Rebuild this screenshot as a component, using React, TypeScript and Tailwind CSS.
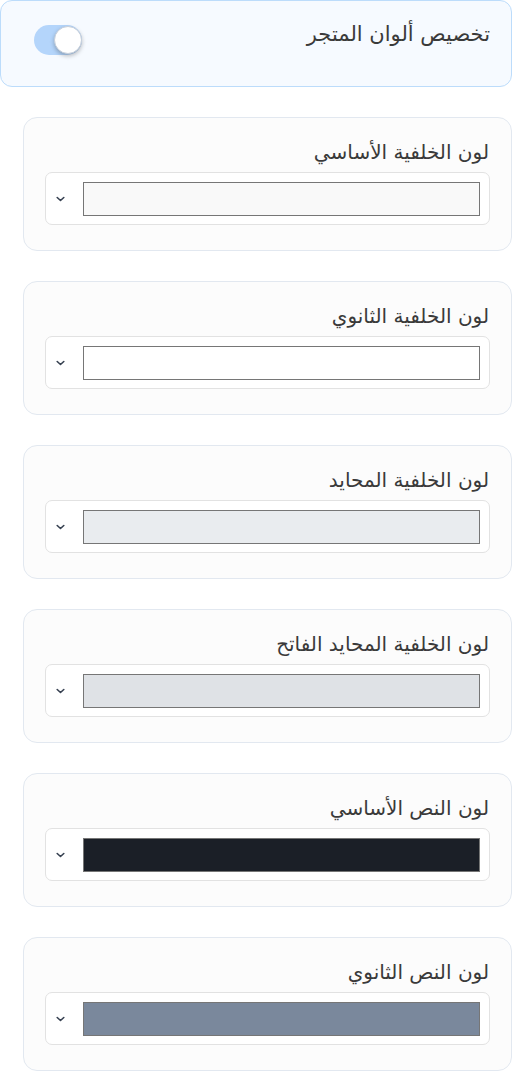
import React, { useState } from 'react';

// Color settings panel: a toggle header followed by one card per color field.
interface ColorField {
  label: string;
  value: string;
}

const fields: ColorField[] = [
  { label: 'لون الخلفية الأساسي', value: '#f9f9f9' },
  { label: 'لون الخلفية الثانوي', value: '#ffffff' },
  { label: 'لون الخلفية المحايد', value: '#e9ecef' },
  { label: 'لون الخلفية المحايد الفاتح', value: '#dfe2e6' },
  { label: 'لون النص الأساسي', value: '#1b1f27' },
  { label: 'لون النص الثانوي', value: '#7a889c' },
];

const Chevron = () => (
  <svg width="9" height="6" viewBox="0 0 9 6" fill="none" className="text-[#374151]">
    <path d="M1.2 1.5L4.5 4.5L7.8 1.5" stroke="currentColor" strokeWidth="1.6" strokeLinecap="round" strokeLinejoin="round" />
  </svg>
);

const ColorCard: React.FC<ColorField> = ({ label, value }) => (
  <div className="ml-[23px] h-[134px] rounded-[14px] border border-[#e2e8f0] bg-[#fcfcfc] px-[21px] pt-[19px]">
    <div className="pr-[1px] text-[20px] leading-[30px] text-[#3a3a3a]">{label}</div>
    <div className="mt-[5px] flex h-[53px] items-center rounded-[7px] border border-[#e2e2e2] bg-white pl-[10px] pr-[9px]">
      <div className="ml-[18px] h-[34px] flex-1 border border-[#767676]" style={{ backgroundColor: value }} />
      <Chevron />
    </div>
  </div>
);

export default function App() {
  const [enabled, setEnabled] = useState(true);

  return (
    <div dir="rtl" className="w-[512px] bg-white font-['DejaVu_Sans',sans-serif]">
      <div className="flex h-[87px] items-start justify-between rounded-[12px] border border-[#bcdcfb] bg-[#f6faff] px-[21px] pt-[18px]">
        <div className="text-[21px] leading-[30px] text-[#3a3a3a]">تخصيص ألوان المتجر</div>
        <button
          onClick={() => setEnabled(!enabled)}
          className="relative ml-[12px] mt-[6px] h-[30px] w-[48px] rounded-full bg-[#b4d5fb]"
        >
          <span className="absolute right-0 top-[1px] h-[28px] w-[28px] rounded-full border border-[#c6cfdb] bg-white shadow-[0_2px_4px_rgba(0,0,0,0.25)]" />
        </button>
      </div>
      <div className="mt-[30px] flex flex-col gap-[30px]">
        {fields.map((f) => (
          <ColorCard key={f.label} {...f} />
        ))}
      </div>
    </div>
  );
}
